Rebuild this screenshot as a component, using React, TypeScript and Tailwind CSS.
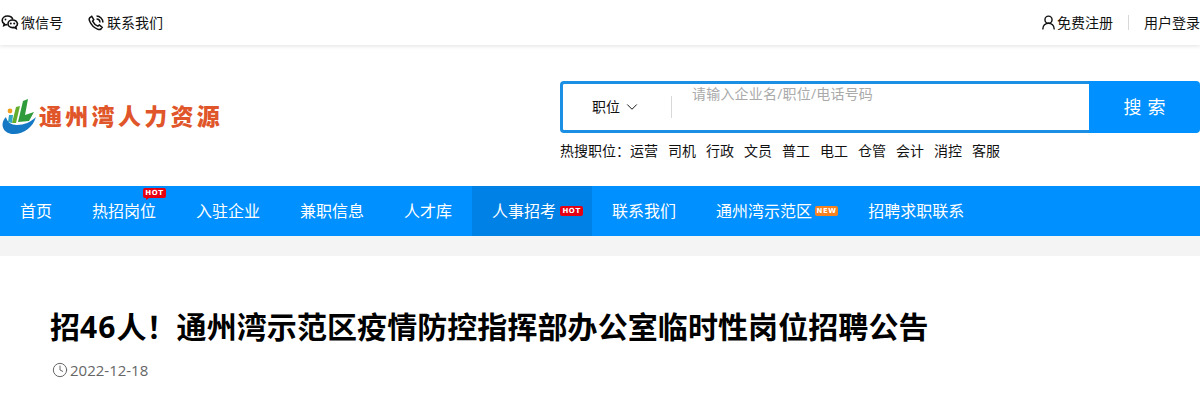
import { ChevronDown, Clock, UserRound } from 'lucide-react'

const hotWords = ['运营', '司机', '行政', '文员', '普工', '电工', '仓管', '会计', '消控', '客服']

function Badge({ text, color }: { text: string; color: string }) {
  return (
    <span className={`flex h-[10px] w-[23px] items-center justify-center rounded-[2px] font-['DejaVu_Sans',sans-serif] text-[7px] leading-none font-bold tracking-[0.6px] text-white ${color}`}>
      {text}
    </span>
  )
}

function WechatIcon() {
  return (
    <svg width="18" height="16" viewBox="0 0 18 16" fill="none" stroke="#111" strokeWidth="1.6">
      <path d="M6.500 9.800c-.5 0-1-.1-1.500-.2l-2.200 1 .4-1.900C2 7.900 1.200 6.700 1.200 5.400 1.200 3 3.500 1 6.500 1c2.600 0 4.800 1.500 5.300 3.500" />
      <path d="M11.500 5C9 5 7 6.700 7 8.800s2 3.800 4.500 3.800c.5 0 1-.1 1.500-.2l2.200 1.100-.4-1.900c1-.7 1.700-1.700 1.700-2.800C16 6.700 14 5 11.500 5z" />
      <circle cx="9.800" cy="8.400" r="1" fill="#111" stroke="none" />
      <circle cx="13.200" cy="8.400" r="1" fill="#111" stroke="none" />
      <circle cx="4.500" cy="4.500" r=".9" fill="#111" stroke="none" />
    </svg>
  )
}

function PhoneIcon() {
  return (
    <svg width="16" height="16" viewBox="0 0 15 15" fill="none" stroke="#111" strokeWidth="1.400">
      <path d="M3.500 1.200 1.800 2.400C.9 3.100 1 4.500 1.600 5.800c1.400 3.300 4 6 7.300 7.400 1.300.6 2.600.6 3.400-.2l1-1.400-2.700-2.200-1.400 1C7.400 9.800 5.200 7.600 4.300 5.800l1.100-1.400z" />
      <path d="M8 3.800a3.300 3.300 0 0 1 3.200 3.200" />
      <path d="M8 1a6 6 0 0 1 6 6" />
    </svg>
  )
}

function Logo() {
  return (
    <svg width="34" height="35" viewBox="0 0 34 35" className="mt-[1px]">
      <path d="M4 18C-3 25 1 35 12 35c10 0 19-7 22-17-5 5-12 8-19 8-6 0-10-3-11-8z" fill="#1578c4" />
      <circle cx="8" cy="12" r="2.400" fill="#f0a020" />
      <path d="M7 16h4l-1 8-4-1z" fill="#2ea7c6" />
      <path d="M14 8l4-1-4 17h-4z" fill="#62ad2c" />
      <path d="M21 2l5-2-3 16 9-3-5 9-11 1z" fill="#2f9b3a" />
    </svg>
  )
}

export default function App() {
  return (
    <div className="min-h-[400px] bg-white font-['Open_Sans','Noto_Sans_CJK_SC',sans-serif] text-[#111]">
      <div className="flex h-[45px] items-center justify-between text-sm shadow-[0_1px_4px_rgba(0,0,0,0.12)]">
        <div className="flex items-center">
          <span className="flex items-center gap-[2px] pl-[1px]">
            <WechatIcon />
            <span>微信号</span>
          </span>
          <span className="ml-[25px] flex items-center gap-[3px]">
            <PhoneIcon />
            <span>联系我们</span>
          </span>
        </div>
        <div className="flex items-center">
          <span className="flex items-center">
            <UserRound size={17} strokeWidth={2} />
            <span>免费注册</span>
          </span>
          <span className="mx-[15px] h-[15px] w-px bg-[#d8d8d8]" />
          <span>用户登录</span>
        </div>
      </div>

      <div className="flex h-[141px] items-start justify-between">
        <div className="mt-[53px] ml-[2px] flex items-center gap-[3px]">
          <Logo />
          <span className="text-[23px] leading-none font-black tracking-[3.300px] text-[#e0562a]">通州湾人力资源</span>
        </div>
        <div className="mt-[36px] w-[640px]">
          <div className="flex h-[52px]">
            <div className="flex flex-1 items-start rounded-l-[4px] border-[3px] border-r-0 border-[#1a8fe3]">
              <div className="mt-[12px] flex h-[22px] w-[109px] items-center gap-[3px] border-r border-[#d8d8d8] pl-[29px] text-sm">
                <span>职位</span>
                <ChevronDown size={18} strokeWidth={1.3} />
              </div>
              <input
                className="ml-[20px] h-[19px] w-[300px] text-sm tracking-[0.2px] outline-none placeholder:text-[#aaa]"
                placeholder="请输入企业名/职位/电话号码"
              />
            </div>
            <button className="w-[111px] rounded-r-[4px] bg-[#0090ff] pl-[6px] text-lg tracking-[6px] text-white">搜索</button>
          </div>
          <div className="mt-[8px] flex items-center text-sm">
            <span>热搜职位：</span>
            <div className="flex gap-[10px]">
              {hotWords.map((w) => (
                <span key={w}>{w}</span>
              ))}
            </div>
          </div>
        </div>
      </div>

      <nav className="flex h-[50px] items-stretch bg-[#0090ff] text-base text-white">
        <a className="flex items-center px-5">首页</a>
        <a className="relative flex items-center px-5">
          热招岗位
          <span className="absolute top-[2px] left-[71px]">
            <Badge text="HOT" color="bg-[#e60012]" />
            <span className="ml-[3px] block h-0 w-0 border-t-[2px] border-r-[3px] border-t-[#e60012] border-r-transparent" />
          </span>
        </a>
        <a className="flex items-center px-5">入驻企业</a>
        <a className="flex items-center px-5">兼职信息</a>
        <a className="flex items-center px-5">人才库</a>
        <a className="flex items-center gap-[4px] bg-[#0081e6] pr-[9px] pl-5">
          人事招考
          <Badge text="HOT" color="bg-[#e60012]" />
        </a>
        <a className="flex items-center px-5">联系我们</a>
        <a className="flex items-center gap-[3px] pr-[10px] pl-5">
          通州湾示范区
          <Badge text="NEW" color="bg-[#f5821f]" />
        </a>
        <a className="flex items-center px-5">招聘求职联系</a>
      </nav>
      <div className="h-[20px] bg-[#f4f4f4]" />

      <div className="px-[50px] pt-[49px]">
        <h1 className="text-[30px] leading-[44px] font-bold tracking-[0.08px] text-black">
          招<span className="tracking-[1px]">46</span>人！通州湾示范区疫情防控指挥部办公室临时性岗位招聘公告
        </h1>
        <div className="mt-[10px] flex items-center gap-[3px] pl-[2px] text-[15px] text-[#666]">
          <Clock size={16} strokeWidth={1.5} />
          <span className="-ml-px">2022-12-18</span>
        </div>
      </div>
    </div>
  )
}
